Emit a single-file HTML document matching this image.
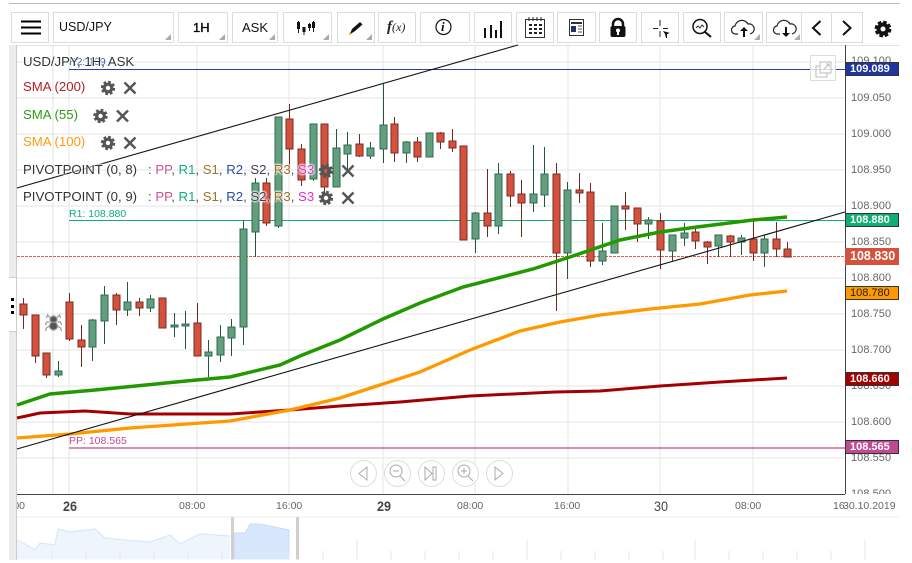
<!DOCTYPE html>
<html><head><meta charset="utf-8">
<style>
html,body{margin:0;padding:0;background:#fff;width:912px;height:563px;overflow:hidden;font-family:"Liberation Sans",Arial,sans-serif}
.a{position:absolute;white-space:nowrap}
.b{position:absolute;top:12px;height:29px;border:1px solid #dcdcdc;box-sizing:content-box;background:#fff}
.t{position:absolute;width:0;height:0;border-left:6px solid transparent;border-bottom:6px solid #aaa;right:2px;bottom:2px}
.l{font-size:13.2px;line-height:14px;text-shadow:0 0 2px #fff,0 0 2px #fff,0 0 2px #fff,0 0 2px #fff}
.y{position:absolute;left:851px;font-size:11px;line-height:14px;color:#666;letter-spacing:.05px}
.g{position:absolute;left:845px;width:54px;box-sizing:border-box;border:1px solid #333;font-size:11px;font-weight:bold;color:#fff;padding-left:4px;line-height:12px;height:14px}
.x{position:absolute;font-size:10.5px;color:#666;line-height:12px}
.d{position:absolute;font-size:14px;font-weight:bold;color:#444;line-height:16px;transform:scaleX(.9);transform-origin:left}
</style></head><body>
<div class="a" style="left:9px;top:3px;width:891px;height:1px;background:#bbb"></div>
<div class="a" style="left:9px;top:45px;width:891px;height:1px;background:#e2e2e2"></div>
<div class="a" style="left:9px;top:45px;width:8px;height:515px;background:#ececec;border-right:1px solid #ccc;box-sizing:border-box"></div>
<div class="a" style="left:9px;top:277px;width:7px;height:55px;background:#fff;border-top:1px solid #ccc;border-bottom:1px solid #ccc;box-sizing:border-box"></div>
<div class="a" style="left:11px;top:298px;width:3px;height:3px;background:#000"></div>
<div class="a" style="left:11px;top:305px;width:3px;height:3px;background:#000"></div>
<div class="a" style="left:11px;top:311px;width:3px;height:3px;background:#000"></div>

<!-- toolbar -->
<div class="b" style="left:11px;width:36px"><svg width="36" height="29"><path d="M10 10.5h20M10 16.5h20M10 22.5h20" stroke="#000" stroke-width="2" transform="translate(-1 -2)"/></svg></div>
<div class="b" style="left:53px;width:119px"><span class="a" style="left:5px;top:7px;font-size:12.5px;color:#111">USD/JPY</span><i class="t"></i></div>
<div class="b" style="left:178px;width:48px"><span class="a" style="left:14px;top:7px;font-size:13px;color:#000;-webkit-text-stroke:.3px #000">1H</span><i class="t"></i></div>
<div class="b" style="left:232px;width:44px"><span class="a" style="left:9px;top:7px;font-size:13px;color:#111">ASK</span><i class="t"></i></div>
<div class="b" style="left:283px;width:47px"><svg width="47" height="29"><g transform="translate(-2 0)"><path d="M16.5 8v12M22 15v7M27.5 10v8M31.5 8v11" stroke="#222" fill="none"/><path d="M15 9h3v7h-3zM20.5 14h3v5h-3zM26 11h3v4h-3zM30 9h3v6h-3z" fill="#111"/></g></svg><i class="t"></i></div>
<div class="b" style="left:337px;width:36px"><svg width="36" height="29"><g transform="translate(-1 0)"><path d="M13 21l2-5 8-7 2.5 2.5-8 7z" fill="#111"/><path d="M12 22l3-1-2-2z" fill="#d89020"/></g></svg><i class="t"></i></div>
<div class="b" style="left:378px;width:36px"><span class="a" style="left:8px;top:6px;font-family:'Liberation Serif',serif;font-style:italic;color:#222;font-size:12px;line-height:16px"><b style="font-size:15px">f</b>(x)</span></div>
<div class="b" style="left:420px;width:48px"><svg width="48" height="29"><circle cx="22.5" cy="14" r="7.500" fill="none" stroke="#111" stroke-width="1.200"/></svg><span class="a" style="left:20px;top:6px;font-family:'Liberation Serif',serif;font-style:italic;font-weight:bold;font-size:13px;color:#111">i</span></div>
<div class="b" style="left:474px;width:36px"><svg width="36" height="29"><path d="M9 15h2v10h-2zM15 12h2v13h-2zM20 17h2v8h-2zM25 8h2v17h-2z" fill="#111"/></svg></div>
<div class="b" style="left:516px;width:36px"><svg width="36" height="29"><rect x="8.5" y="6.500" width="19" height="18" fill="none" stroke="#333"/><path d="M12 4v4M16 4v4M20 4v4M24 4v4" stroke="#222"/><path d="M12 11h3v2h-3zM17 11h3v2h-3zM22 11h3v2h-3zM12 15h3v2h-3zM17 15h3v2h-3zM22 15h3v2h-3zM12 19h3v2h-3zM17 19h3v2h-3zM22 19h3v2h-3z" fill="#222"/></svg></div>
<div class="b" style="left:557px;width:37px"><svg width="37" height="29"><g transform="translate(0 -1)"><rect x="11.500" y="7.500" width="14" height="16" fill="#fff" stroke="#333"/><path d="M13 10h11v2h-11z" fill="#333"/><path d="M13 14h5v6h-5z" fill="#235"/><path d="M20 14h4M20 17h4M20 20h4" stroke="#555"/></g></svg></div>
<div class="b" style="left:599px;width:36px"><svg width="36" height="29"><path d="M13 14v-3a5 5 0 0 1 10 0v3" fill="none" stroke="#111" stroke-width="2.500"/><rect x="10.500" y="13" width="15" height="11" rx="2" fill="#111"/><circle cx="18" cy="17.500" r="2" fill="#fff"/><path d="M17 18h2v4h-2z" fill="#fff"/></svg></div>
<div class="b" style="left:641px;width:36px"><svg width="36" height="29"><path d="M18 7v6M18 18v6M11 15.500h5M21 15.500h5" stroke="#222"/><path d="M21 18l7 2-3 1 0 4-1 0-1-4z" fill="#111"/></svg></div>
<div class="b" style="left:683px;width:36px"><svg width="36" height="29"><circle cx="16" cy="13.500" r="7" fill="none" stroke="#111" stroke-width="1.500"/><path d="M21 19l6 5" stroke="#111" stroke-width="2"/><path d="M12 15l2-2 2 2 2-3 2 2" fill="none" stroke="#333"/></svg></div>
<div class="b" style="left:724px;width:37px"><svg width="37" height="29"><g transform="translate(1 0)"><path d="M12 21h-2a4 4 0 0 1-1-8 7 7 0 0 1 13-2 5 5 0 0 1 4 9l-2 1" fill="none" stroke="#222" stroke-width="1.200"/><path d="M18 14l-4 4h3v6h2v-6h3z" fill="#111"/></g></svg><i class="t"></i></div>
<div class="b" style="left:766px;width:35px"><svg width="35" height="29"><g transform="translate(2 0)"><path d="M11 21h-2a4 4 0 0 1-1-8 7 7 0 0 1 13-2 5 5 0 0 1 4 9l-2 1" fill="none" stroke="#222" stroke-width="1.200"/><path d="M17 24l-4-4h3v-6h2v6h3z" fill="#111"/></g></svg><i class="t"></i></div>
<div class="b" style="left:801px;width:30px"><svg width="30" height="29"><path d="M18.500 8l-7.500 7 7.500 7" fill="none" stroke="#111" stroke-width="2"/></svg></div>
<div class="b" style="left:831px;width:30px"><svg width="30" height="29"><path d="M11 8l7.500 7-7.500 7" fill="none" stroke="#111" stroke-width="2"/></svg></div>
<svg class="a" style="left:873px;top:19px" width="20" height="20" viewBox="-10 -10 20 20"><circle r="4.500" fill="none" stroke="#111" stroke-width="4"/><circle r="7" fill="none" stroke="#111" stroke-width="2.800" stroke-dasharray="3.500 2"/></svg>

<!-- chart -->
<svg class="a" style="left:0;top:0" width="912" height="563">
<g stroke="#ededed" stroke-width="1.500" fill="none">
<path d="M69 46V494M197 46V494M289 46V494M383 46V494M475 46V494M568 46V494M660 46V494M753 46V494"/>
<path d="M17 62H845M17 98H845M17 134H845M17 170H845M17 206H845M17 242H845M17 278H845M17 314H845M17 350H845M17 386H845M17 422H845M17 458H845"/>
</g>
<path d="M53 46V494" stroke="#e0e0e0"/>
<!-- horizontal levels -->
<path d="M69 69.500H845" stroke="#2a3f9f"/>
<path d="M69 220.500H845" stroke="#10ae72"/>
<path d="M69 448H845" stroke="#c04a92" stroke-width="1.300"/>
<path d="M17 256.500H845" stroke="#e8574a" stroke-dasharray="3 1"/>
<!-- wicks red -->
<g stroke="#6e2a22" fill="none" stroke-width="1">
<path d="M23.500 298V329M35.500 315V363M46.500 353V378M69.500 293V341M81.500 325V367M116.500 293V325M139.500 298V316M197.500 303V356M266.500 178V226M289.500 104V170M301.500 144V186M324.500 124V194M359.500 134V157M394.500 117V162M417.500 137V162M440.500 132V149M452.500 129V152M487.500 169V237M510.500 171V207M521.500 180V237M556.500 163V311M579.500 173V203M590.500 183V267M625.500 192V230M637.500 208V242M660.500 213V269M695.500 229V249M707.500 241V264M730.500 235V257M753.500 220V261M776.500 222V257M787.500 242V257"/>
</g>
<!-- wicks green -->
<g stroke="#22583f" fill="none" stroke-width="1">
<path d="M58.500 361V377M92.500 319V361M104.500 286V344M127.500 282V316M150.500 295V312M174.500 313V337M185.500 311V349M208.500 340V377M220.500 325V362M231.500 319V356M243.500 220V345M255.500 178V257M278.500 117V228M313.500 124V181M336.500 129V187M347.500 132V169M370.500 142V159M383.500 84V163M406.500 141V163M429.500 133V157M475.500 212V253M498.500 163V234M533.500 145V212M544.500 147V207M567.500 182V279M602.500 223V265M614.500 206V253M648.500 217V239M672.500 235V261M684.500 223V246M718.500 235V257M741.500 235V255M764.500 235V267"/>
</g>
<!-- bodies red -->
<g fill="#d4513d" stroke="#7a2a22" stroke-width="1">
<path d="M20 304h7v11h-7zM32 315h7v41h-7zM43 353h7v22h-7zM66 302h7v37h-7zM78 340h7v7h-7zM113 295h7v15h-7zM136 302h7v6h-7zM159 298h7v30h-7zM194 323h7v33h-7zM263 183h7v40h-7zM286 119h7v30h-7zM298 149h7v31h-7zM321 124h7v63h-7zM356 144h7v12h-7zM391 124h7v29h-7zM414 142h7v15h-7zM437 133h7v9h-7zM449 141h7v7h-7zM460 146h7v94h-7zM484 213h7v13h-7zM507 174h7v22h-7zM518 194h7v9h-7zM553 174h7v79h-7zM576 190h7v3h-7zM587 192h7v69h-7zM622 206h7v3h-7zM634 208h7v16h-7zM657 221h7v29h-7zM692 232h7v9h-7zM704 242h7v5h-7zM727 236h7v6h-7zM750 239h7v14h-7zM773 239h7v10h-7zM784 249h7v8h-7z"/>
</g>
<!-- bodies green -->
<g fill="#639f7f" stroke="#2d6a4f" stroke-width="1">
<path d="M55 371h7v4h-7zM89 320h7v27h-7zM101 295h7v26h-7zM124 302h7v8h-7zM147 299h7v9h-7zM171 325h7v2h-7zM182 324h7v2h-7zM205 352h7v4h-7zM217 337h7v18h-7zM228 327h7v11h-7zM240 229h7v98h-7zM252 183h7v49h-7zM275 117h7v109h-7zM310 124h7v55h-7zM333 148h7v39h-7zM344 145h7v9h-7zM367 148h7v8h-7zM380 125h7v24h-7zM403 142h7v11h-7zM426 133h7v24h-7zM472 213h7v26h-7zM495 174h7v52h-7zM530 194h7v9h-7zM541 174h7v21h-7zM564 190h7v63h-7zM599 251h7v10h-7zM611 206h7v47h-7zM645 220h7v4h-7zM669 235h7v16h-7zM681 233h7v5h-7zM715 235h7v11h-7zM738 238h7v4h-7zM761 239h7v14h-7z"/>
</g>
<!-- MAs -->
<path d="M17 418L40 413 85 411 130 414 230 414 290 410 340 406 400 402 470 396 555 392 600 391 660 386 720 382 787 378" fill="none" stroke="#a30000" stroke-width="3"/>
<path d="M17 438L70 434 130 428 230 421 290 410 340 398 380 385 420 372 470 350 520 331 560 322 600 315 650 309 700 304 750 295 787 291" fill="none" stroke="#ff9900" stroke-width="3.300"/>
<path d="M17 405L50 394 95 390 186 381 230 377 280 365 300 356 340 340 383 319 420 303 463 287 533 269 570 257 620 240 660 232 697 227 753 220 787 217" fill="none" stroke="#229900" stroke-width="3.500"/>
<!-- trend lines -->
<path d="M17 188L518 45" stroke="#111" stroke-width="1.100" fill="none"/>
<path d="M17 449L845 212" stroke="#111" stroke-width="1.100" fill="none"/>
<!-- axes -->
<path d="M845.500 45V494M17 494.500H845" stroke="#444" fill="none"/>
<!-- spider -->
<g transform="translate(53.5 323)" fill="#555" stroke="#999" stroke-width="1.200">
<circle cy="-3.500" r="3.500"/><circle cy="3" r="4"/>
<path d="M-3-5l-3-3-1 3M3-5l3-3 1 3M-4-1h-3l-1 3M4-1h3l1 3M-4 3l-3 2-1 3M4 3l3 2 1 3" fill="none"/>
</g>
<!-- expander -->
<rect x="810.500" y="55.500" width="25" height="25" fill="#fff" fill-opacity=".8" stroke="#dcdcdc"/>
<path d="M819 66h-3v11h11v-4M820 62h11v11h-11zM824 69l5-5M826 64h3v3" fill="none" stroke="#bbb"/>
<!-- nav -->
<g fill="#fff" stroke="#ddd">
<circle cx="363.500" cy="473.500" r="13"/><circle cx="397.500" cy="473.500" r="13"/><circle cx="431.500" cy="473.500" r="13"/><circle cx="465.500" cy="473.500" r="13"/><circle cx="499.500" cy="473.500" r="13"/>
</g>
<g fill="none" stroke="#aaa">
<path d="M367 467v13l-8-6.500zM495 467v13l8-6.500z"/>
<circle cx="396" cy="471" r="6"/><path d="M400 476l5 5M393 471h6"/>
<circle cx="464" cy="471" r="6"/><path d="M468 476l5 5M461 471h6M464 468v6"/>
<path d="M425 467v13l7-6.500zM433 467h3v13h-3z"/>
</g>
<!-- minimap -->
<path d="M17 517H899" stroke="#eee"/>
<path d="M17 540L25 544 35 550 40 543 55 545 58 529 70 532 95 529 105 538 125 540 150 542 170 535 180 544 200 534 230 536V560H17z" fill="#eef5fd" stroke="none"/>
<path d="M17 540L25 544 35 550 40 543 55 545 58 529 70 532 95 529 105 538 125 540 150 542 170 535 180 544 200 534 230 536" fill="none" stroke="#d8e8fb" stroke-width="1.200"/>
<path d="M234 533L245 533 250 524 260 524 289 530V560H234z" fill="#d8e7fc" stroke="#bcd8f8" stroke-width=".8"/>
<rect x="231" y="517" width="3" height="43" fill="#d0d0d0"/>
<rect x="296" y="517" width="3" height="43" fill="#d0d0d0"/>
<g stroke="#e6e6e6"><path d="M52 551V560M86 551V560M120 551V560M154 551V560M188 551V560M222 551V560M255 551V560M289 551V560M323 551V560M357 540V560M391 551V560M425 551V560M459 551V560M493 551V560M527 540V560M561 551V560M595 551V560M629 551V560M663 551V560M695 540V560M729 551V560M763 551V560M797 551V560M831 551V560M865 540V560"/></g>
<path d="M17 560H899" stroke="#fff"/>
</svg>

<!-- level labels -->
<div class="a" style="left:69px;top:56px;width:38px;overflow:hidden;font-size:10.5px;color:#3a55b5">R2: 109.089</div>
<div class="a" style="left:69px;top:208px;font-size:10.5px;color:#10ae72;line-height:12px">R1: 108.880</div>
<div class="a" style="left:69px;top:435px;font-size:10.5px;color:#c04a92;line-height:12px">PP: 108.565</div>

<!-- axis -->
<div class="y" style="top:54px">109.100</div>
<div class="y" style="top:91px">109.050</div>
<div class="y" style="top:127px">109.000</div>
<div class="y" style="top:163px">108.950</div>
<div class="y" style="top:199px">108.900</div>
<div class="y" style="top:235px">108.850</div>
<div class="y" style="top:271px">108.800</div>
<div class="y" style="top:307px">108.750</div>
<div class="y" style="top:343px">108.700</div>
<div class="y" style="top:379px">108.650</div>
<div class="y" style="top:415px">108.600</div>
<div class="y" style="top:451px">108.550</div>
<div class="y" style="top:487px;height:7px;overflow:hidden">108.500</div>
<div class="g" style="top:62px;background:#1f36a0">109.089</div>
<div class="g" style="top:213px;background:#10ae72">108.880</div>
<div class="g" style="top:248px;height:17px;background:#d4513d;border:0;font-size:12.5px;line-height:17px;padding-left:5px">108.830</div>
<div class="g" style="top:286px;background:#ff9900;color:#222;font-weight:normal">108.780</div>
<div class="g" style="top:372px;background:#a30000">108.660</div>
<div class="g" style="top:440px;background:#c04a92">108.565</div>

<!-- time -->
<div class="x" style="left:17px;top:500px;width:8px;overflow:hidden;direction:rtl">00</div>
<div class="d" style="left:63px;top:498px">26</div>
<div class="x" style="left:179px;top:500px">08:00</div>
<div class="x" style="left:276px;top:500px">16:00</div>
<div class="d" style="left:377px;top:498px">29</div>
<div class="x" style="left:457px;top:500px">08:00</div>
<div class="x" style="left:554px;top:500px">16:00</div>
<div class="d" style="left:654px;top:498px;font-weight:normal">30</div>
<div class="x" style="left:735px;top:500px">08:00</div>
<div class="x" style="left:833px;top:500px">16</div>
<div class="x" style="left:843px;top:500px">30.10.2019</div>

<!-- legend -->
<div class="a l" style="left:23px;top:55px;color:#333">USD/JPY, 1H, ASK</div>
<div class="a l" style="left:23px;top:80px;color:#b02020">SMA (200)</div>
<div class="a l" style="left:23px;top:108px;color:#2f9a10">SMA (55)</div>
<div class="a l" style="left:23px;top:135px;color:#ff9a10">SMA (100)</div>
<div class="a l" style="left:23px;top:163px;color:#333">PIVOTPOINT (0, 8)</div>
<div class="a l" style="left:23px;top:190px;color:#333">PIVOTPOINT (0, 9)</div>
<div class="a l" style="left:148px;top:163px;color:#555">: <span style="color:#d0509a">PP</span>, <span style="color:#10ae72">R1</span>, <span style="color:#a07030">S1</span>, <span style="color:#2a4aa8">R2</span>, <span style="color:#4a3a50">S2</span>, <span style="color:#a06a20">R3</span>, <span style="color:#e030d0">S3</span></div>
<div class="a l" style="left:148px;top:190px;color:#555">: <span style="color:#d0509a">PP</span>, <span style="color:#10ae72">R1</span>, <span style="color:#a07030">S1</span>, <span style="color:#2a4aa8">R2</span>, <span style="color:#4a3a50">S2</span>, <span style="color:#a06a20">R3</span>, <span style="color:#e030d0">S3</span></div>
<svg class="a" style="left:0;top:0" width="912" height="563">
<defs><g id="k"><circle r="3.800" fill="none" stroke="#555" stroke-width="3.200"/><circle r="6" fill="none" stroke="#555" stroke-width="2.400" stroke-dasharray="2.700 2"/></g>
<path id="c" d="M-5.500-5.500L5.500 5.500M5.500-5.500L-5.500 5.500" stroke="#555" stroke-width="2.400" fill="none"/></defs>
<use href="#k" x="108" y="88"/><use href="#c" x="130" y="88"/>
<use href="#k" x="100.500" y="116"/><use href="#c" x="122.500" y="116"/>
<use href="#k" x="108" y="143"/><use href="#c" x="130" y="143"/>
<use href="#k" x="326" y="171"/><use href="#c" x="348" y="171"/>
<use href="#k" x="326" y="198"/><use href="#c" x="348" y="198"/>
</svg>
</body></html>
